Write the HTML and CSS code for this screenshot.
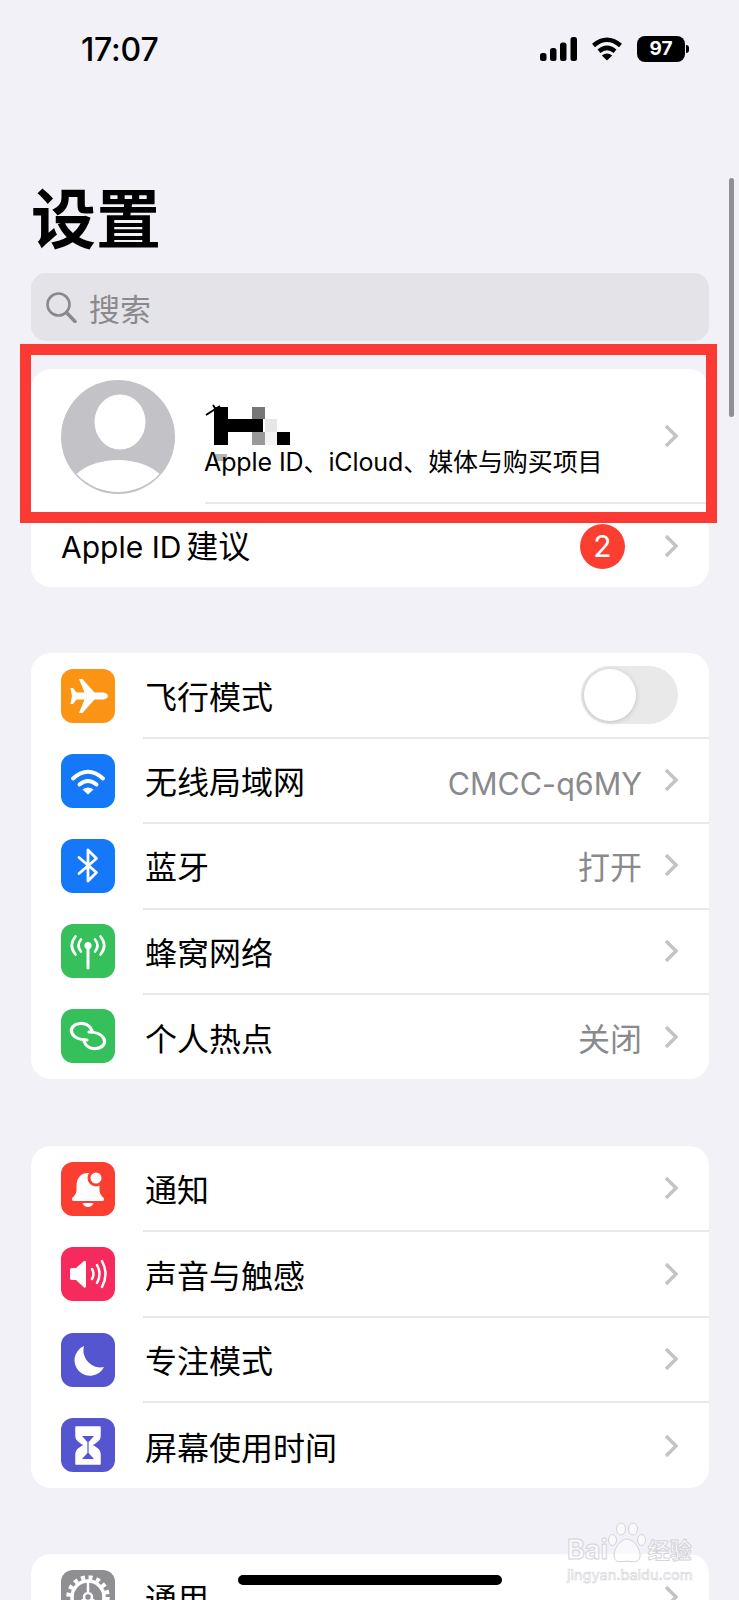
FILE: index.html
```html
<!DOCTYPE html>
<html lang="zh-CN">
<head>
    <meta charset="UTF-8">
    <meta name="viewport" content="width=device-width, initial-scale=1.0">
    <title>设置</title>
    <link rel="stylesheet" href="styles.css">
</head>
<body>
    <div class="status">
        <span class="time">17:07</span>
        <div class="status-icons">
            <svg class="signal" width="37" height="24" viewBox="0 0 37 24"><rect x="0" y="16" width="6.5" height="8" rx="2.5"/><rect x="10" y="11" width="6.5" height="13" rx="2.5"/><rect x="20" y="5.500" width="6.5" height="18.500" rx="2.5"/><rect x="30.500" y="0" width="6.500" height="24" rx="2.5"/></svg>
            <svg class="wifi" width="32" height="24" viewBox="0 0 32 24"><path d="M2.500 8.500Q16-3 29.500 8.500M8 14.200Q16 7.500 24 14.200" fill="none" stroke="#000" stroke-width="4.500"/><path d="M16 23.500L10.800 18.500Q16 14.500 21.200 18.500Z"/></svg>
            <div class="battery"><span class="battery-level">97</span><span class="battery-tip"></span></div>
        </div>
    </div>

    <h1 class="title">设置</h1>

    <div class="search">
        <svg width="32" height="32" viewBox="0 0 32 32"><circle cx="13.500" cy="13.500" r="11" fill="none" stroke="#8a8a8e" stroke-width="2.600"/><path d="M21.500 21.500L30 30.500" stroke="#8a8a8e" stroke-width="3.400" stroke-linecap="round"/></svg>
        <span>搜索</span>
    </div>

    <div class="card card-account">
        <div class="profile">
            <svg class="avatar" width="114" height="114" viewBox="0 0 114 114">
                <circle cx="57" cy="57" r="57" fill="#c2c2c7"/>
                <ellipse cx="59" cy="42" rx="25.500" ry="27.500" fill="#fff"/>
                <path d="M15.500 94A49 30 0 0 1 98.500 94A57 57 0 0 1 15.500 94Z" fill="#fff"/>
            </svg>
            <div class="profile-body">
                <div class="profile-text">
                    <svg class="mosaic" width="90" height="42" viewBox="0 0 90 42">
                        <path d="M2 11L16 2M9 1L13 7" stroke="#000" stroke-width="2"/>
                        <rect x="10" y="3" width="14" height="38"/>
                        <rect x="24" y="15" width="35" height="13"/>
                        <rect x="48" y="3" width="13" height="12" fill="#777"/>
                        <rect x="48" y="28" width="13" height="13" fill="#999"/>
                        <rect x="61" y="15" width="12" height="13" fill="#e6e6e6"/>
                        <rect x="61" y="28" width="12" height="13" fill="#f3f3f3"/>
                        <rect x="73" y="28" width="13" height="13"/>
                        <rect x="10" y="50" width="13" height="7" fill="#b5b5b5"/>
                    </svg>
                    <span class="profile-sub">Apple ID、iCloud、媒体与购买项目</span>
                </div>
                <svg class="chevron" width="14" height="24" viewBox="0 0 14 24"><path d="M2 2L12 12L2 22"/></svg>
            </div>
        </div>
        <div class="row row-plain">
            <div class="row-body">
                <span class="label"><span class="latin">Apple ID</span>建议</span>
                <span class="badge">2</span>
                <svg class="chevron" width="14" height="24" viewBox="0 0 14 24"><path d="M2 2L12 12L2 22"/></svg>
            </div>
        </div>
    </div>

    <div class="card">
        <div class="row">
            <svg class="icon orange" viewBox="0 0 54 54"><path d="M47 27C47 25 44 23.500 41 23.500H33.500L21.500 10H18L23.500 23.500H15.500L12 19H9.500L11 27L9.500 35H12L15.500 30.500H23.500L18 44H21.500L33.500 30.500H41C44 30.500 47 29 47 27Z" fill="#fff"/></svg>
            <div class="row-body">
                <span class="label">飞行模式</span>
                <span class="toggle"><span class="knob"></span></span>
            </div>
        </div>
        <div class="row">
            <svg class="icon blue" viewBox="0 0 54 54"><path d="M12 24.500Q27 11 42 24.500M18.500 30.500Q27 23.500 35.500 30.500" fill="none" stroke="#fff" stroke-width="4" stroke-linecap="round"/><path d="M27 40.500L21.500 35.500Q27 31.500 32.500 35.500Z" fill="#fff"/></svg>
            <div class="row-body">
                <span class="label">无线局域网</span>
                <span class="value value-latin">CMCC-q6MY</span>
                <svg class="chevron" width="14" height="24" viewBox="0 0 14 24"><path d="M2 2L12 12L2 22"/></svg>
            </div>
        </div>
        <div class="row">
            <svg class="icon blue" viewBox="0 0 54 54"><path d="M18 18.500L35.500 33.500L27 42V11L35.500 19.500L18 34.500" fill="none" stroke="#fff" stroke-width="2.800" stroke-linejoin="round" stroke-linecap="round"/></svg>
            <div class="row-body">
                <span class="label">蓝牙</span>
                <span class="value">打开</span>
                <svg class="chevron" width="14" height="24" viewBox="0 0 14 24"><path d="M2 2L12 12L2 22"/></svg>
            </div>
        </div>
        <div class="row">
            <svg class="icon green" viewBox="0 0 54 54"><circle cx="27" cy="21.500" r="3.600" fill="#fff"/><path d="M27 23V44" stroke="#fff" stroke-width="3" stroke-linecap="round"/><path d="M14.500 12.500Q7 21.500 14.500 30.500M39.500 12.500Q47 21.500 39.500 30.500M20 15.500Q15 21.500 20 27.500M34 15.500Q39 21.500 34 27.500" fill="none" stroke="#fff" stroke-width="2.600" stroke-linecap="round"/></svg>
            <div class="row-body">
                <span class="label">蜂窝网络</span>
                <svg class="chevron" width="14" height="24" viewBox="0 0 14 24"><path d="M2 2L12 12L2 22"/></svg>
            </div>
        </div>
        <div class="row">
            <svg class="icon green" viewBox="0 0 54 54"><path d="M31 21.500C29 16.500 24 14 19 14.500C12 15 9 20 11 24C13 29 20 31 26 31M23 32.500C25 37.500 30 40 35 39.500C42 39 45 34 43 30C41 25 34 23 28 23" fill="none" stroke="#fff" stroke-width="3.200" stroke-linecap="round"/></svg>
            <div class="row-body">
                <span class="label">个人热点</span>
                <span class="value">关闭</span>
                <svg class="chevron" width="14" height="24" viewBox="0 0 14 24"><path d="M2 2L12 12L2 22"/></svg>
            </div>
        </div>
    </div>

    <div class="card card-tall">
        <div class="row">
            <svg class="icon red" viewBox="0 0 54 54"><path d="M27 11C19 11 15.500 17 15.500 24V28C15.500 32 13 34 11 36.500Q10.500 39 13 39H41Q43.500 39 43 36.500C41 34 38.500 32 38.500 28V24C38.500 17 35 11 27 11Z" fill="#fff"/><path d="M21.500 41H32.500Q31 45 27 45Q23 45 21.500 41Z" fill="#fff"/><circle cx="35" cy="16" r="8.500" fill="#fb3e30"/><circle cx="35" cy="16" r="5.500" fill="#fff"/></svg>
            <div class="row-body">
                <span class="label">通知</span>
                <svg class="chevron" width="14" height="24" viewBox="0 0 14 24"><path d="M2 2L12 12L2 22"/></svg>
            </div>
        </div>
        <div class="row">
            <svg class="icon pink" viewBox="0 0 54 54"><path d="M9 22.500Q9 21 11 21H15L23 14Q25 13 25 15.500V39Q25 41.500 23 40.500L15 33H11Q9 33 9 31.500Z" fill="#fff"/><path d="M31 22Q34 27 31 32M36 18Q41 27 36 36M41 14Q48 27 41 40" fill="none" stroke="#fff" stroke-width="2.500" stroke-linecap="round"/></svg>
            <div class="row-body">
                <span class="label">声音与触感</span>
                <svg class="chevron" width="14" height="24" viewBox="0 0 14 24"><path d="M2 2L12 12L2 22"/></svg>
            </div>
        </div>
        <div class="row">
            <svg class="icon indigo" viewBox="0 0 54 54"><path d="M23 13A15.500 15.500 0 1 0 43 34A17 17 0 0 1 23 13Z" fill="#fff"/></svg>
            <div class="row-body">
                <span class="label">专注模式</span>
                <svg class="chevron" width="14" height="24" viewBox="0 0 14 24"><path d="M2 2L12 12L2 22"/></svg>
            </div>
        </div>
        <div class="row">
            <svg class="icon indigo" viewBox="0 0 54 54"><path d="M15 9H39V18Q39 23 30 27Q39 31 39 36V46H15V36Q15 31 24 27Q15 23 15 18Z" fill="#fff" stroke="#fff" stroke-linejoin="round" stroke-width="1.500"/><path d="M21 18H33L27.600 24V35L33 41H21L26.400 35V24Z" fill="#5455cf"/></svg>
            <div class="row-body">
                <span class="label">屏幕使用时间</span>
                <svg class="chevron" width="14" height="24" viewBox="0 0 14 24"><path d="M2 2L12 12L2 22"/></svg>
            </div>
        </div>
    </div>

    <div class="card">
        <div class="row">
            <svg class="icon gray" viewBox="0 0 54 54"><circle cx="27" cy="27" r="19.500" fill="none" stroke="#fff" stroke-width="4.500" stroke-dasharray="4 3.660"/><circle cx="27" cy="27" r="16" fill="none" stroke="#fff" stroke-width="3.500"/><path d="M27 27L27 12M27 27L14 35M27 27L40 35" stroke="#fff" stroke-width="2.500"/><circle cx="27" cy="27" r="4" fill="#8e8e93" stroke="#fff" stroke-width="2.500"/></svg>
            <div class="row-body">
                <span class="label">通用</span>
                <svg class="chevron" width="14" height="24" viewBox="0 0 14 24"><path d="M2 2L12 12L2 22"/></svg>
            </div>
        </div>
    </div>

    <!-- things that sit over the list -->
    <div class="highlight"></div>
    <div class="scrollbar"></div>
    <div class="home-bar"></div>
    <div class="watermark">
        <div class="wm-top">
            <span>Bai</span>
            <svg width="38" height="42" viewBox="0 0 38 42"><g fill="rgba(255,255,255,.55)" stroke="#d4d4d8" stroke-width="1"><ellipse cx="13" cy="7" rx="4.500" ry="6"/><ellipse cx="25" cy="7" rx="4.500" ry="6"/><ellipse cx="4.500" cy="18" rx="4" ry="5.500"/><ellipse cx="33.500" cy="18" rx="4" ry="5.500"/><path d="M19 17C12 17 5 28 6 35C7 41 14 40 19 39C24 40 31 41 32 35C33 28 26 17 19 17Z"/></g></svg>
            <span class="wm-cn">经验</span>
        </div>
        <div class="wm-url">jingyan.baidu.com</div>
    </div>
</body>
</html>
```

FILE: styles.css
```css
html, body {
    margin: 0;
    height: 1600px;
    overflow: hidden;
}
body {
    position: relative;
    background: #f2f1f7;
    color: #000;
    font-family: Inter, "Noto Sans CJK SC", sans-serif;
}
.status {
    display: flex;
    justify-content: space-between;
    align-items: center;
    height: 98px;
    padding: 0 50px 0 81px;
}
.time {
    font-size: 32px;
    font-weight: 500;
    letter-spacing: -0.2px;
}
.status-icons {
    display: flex;
    align-items: center;
    gap: 14px;
}
.battery {
    display: flex;
    align-items: center;
    gap: 1px;
}
.battery-level {
    width: 48px;
    height: 26px;
    line-height: 26px;
    border-radius: 8px;
    background: #000;
    color: #fff;
    font-size: 19px;
    font-weight: 700;
    text-align: center;
}
.battery-tip {
    width: 3px;
    height: 8px;
    border-radius: 0 3px 3px 0;
    background: #000;
}
.title {
    margin: 0;
    padding-top: 75px;
    padding-bottom: 5px;
    padding-left: 31px;
    font-size: 65px;
    font-weight: 700;
    line-height: 84px;
    font-family: "Noto Sans CJK SC", sans-serif;
}
.search {
    display: flex;
    align-items: center;
    gap: 12px;
    height: 68px;
    margin: 11px 30px 0 31px;
    padding-left: 14px;
    border-radius: 15px;
    background: #e3e3e8;
    color: #8a8a8e;
    font-size: 31px;
}
.card {
    margin: 66px 30px 0 31px;
    border-radius: 20px;
    background: #fff;
    overflow: hidden;
}
.card-account {
    margin-top: 28px;
}
.card-tall {
    margin-top: 67px;
}
.card-tall .row {
    height: 85.5px;
}
.profile {
    display: flex;
    align-items: center;
    height: 135px;
    padding-left: 29px;
    gap: 30px;
}
.avatar {
    flex: none;
    margin-left: 1px;
}
.profile-body {
    flex: 1;
    align-self: stretch;
    display: flex;
    align-items: center;
    padding-right: 31px;
    border-bottom: 2px solid #e8e8eb;
}
.profile-text {
    flex: 1;
    display: flex;
    flex-direction: column;
    align-items: flex-start;
    gap: 2px;
    margin-left: -1px;
}
.mosaic {
    margin-top: 10px;
    margin-bottom: -2px;
    overflow: visible;
}
.profile-sub {
    font-size: 25px;
    line-height: 32px;
    letter-spacing: -0.1px;
}
.row {
    display: flex;
    align-items: stretch;
    height: 85.2px;
    padding-left: 30px;
    gap: 28px;
}
.row-plain {
    height: 83px;
    gap: 0;
}
.icon {
    flex: none;
    width: 54px;
    height: 54px;
    align-self: center;
    border-radius: 12px;
}
.orange { background: #fb9414; }
.blue { background: #1478f8; }
.green { background: #36c05c; }
.red { background: #fb3e30; }
.pink { background: #f72a5d; }
.indigo { background: #5455cf; }
.gray { background: #8e8e93; }
.row-body {
    flex: 1;
    display: flex;
    align-items: center;
    margin-bottom: -1px;
    padding-right: 31px;
    border-bottom: 2px solid #e8e8eb;
}
.row:last-child .row-body {
    border-bottom: 0;
}
.label {
    flex: 1;
    margin-left: 2px;
    font-size: 32px;
    white-space: nowrap;
}
.row-plain .label {
    margin-left: 0;
    padding-bottom: 5px;
}
.latin {
    margin-right: 5px;
    font-size: 30px;
}
.value {
    margin-right: 22px;
    color: #8a8a8e;
    font-size: 32px;
}
.value-latin {
    padding-top: 6px;
    font-size: 30.5px;
}
.chevron {
    flex: none;
    fill: none;
    stroke: #c4c4c8;
    stroke-width: 3.5;
}
.badge {
    width: 45px;
    height: 45px;
    margin-right: 39px;
    border-radius: 50%;
    background: #fb3e30;
    color: #fff;
    font-size: 30px;
    line-height: 45px;
    text-align: center;
}
.toggle {
    display: flex;
    align-items: center;
    width: 97px;
    height: 58px;
    border-radius: 29px;
    background: #e9e9ea;
}
.knob {
    width: 52px;
    height: 52px;
    margin-left: 3px;
    border-radius: 50%;
    background: #fff;
    box-shadow: 0 1px 5px rgba(0, 0, 0, 0.18);
}
.highlight {
    position: absolute;
    left: 20px;
    top: 344px;
    width: 675px;
    height: 157px;
    border: 11px solid #fb3a33;
}
.scrollbar {
    position: absolute;
    left: 729px;
    top: 178px;
    width: 5px;
    height: 239px;
    border-radius: 3px;
    background: #8f8f94;
}
.home-bar {
    position: absolute;
    left: 238px;
    top: 1575px;
    width: 264px;
    height: 10px;
    border-radius: 5px;
    background: #000;
}
.watermark {
    position: absolute;
    left: 567px;
    top: 1520px;
    width: 134px;
    color: rgba(255, 255, 255, 0.6);
    -webkit-text-stroke: 1px #d4d4d8;
}
.wm-top {
    display: flex;
    align-items: flex-end;
    height: 44px;
    font-size: 27px;
    font-weight: 700;
    line-height: 28px;
}
.wm-cn {
    margin-left: 2px;
    font-size: 22px;
}
.wm-url {
    margin-top: 3px;
    font-size: 14.5px;
    line-height: 16px;
    white-space: nowrap;
    -webkit-text-stroke-width: 0.6px;
}
```
